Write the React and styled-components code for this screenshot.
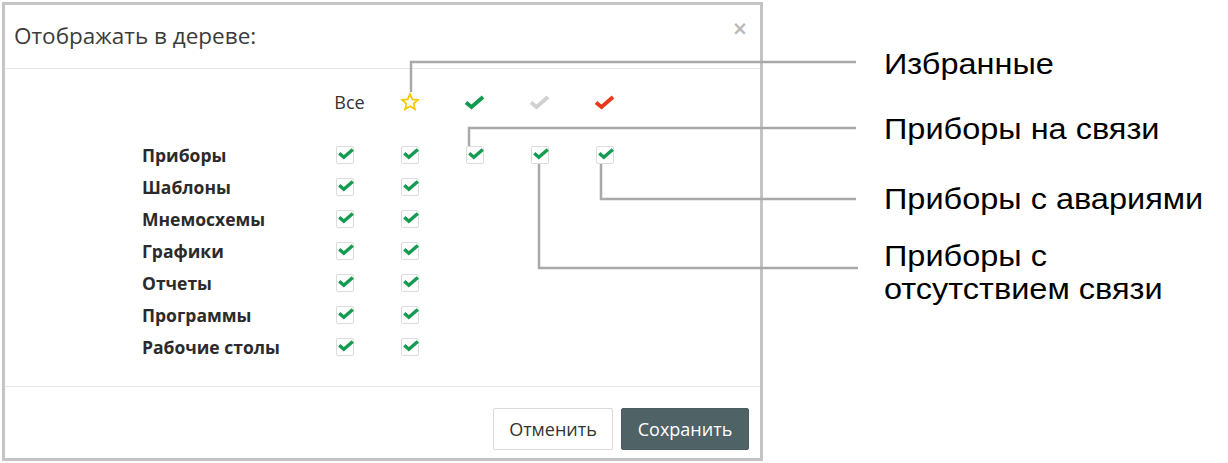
import React from "react";
import styled, { createGlobalStyle } from "styled-components";

const Global = createGlobalStyle`
  html, body { margin: 0; padding: 0; background: #fff; }
  body { font-family: "Open Sans", "Noto Sans", sans-serif; }
  * { box-sizing: border-box; }
`;

const Page = styled.div`
  position: relative;
  width: 1228px;
  height: 463px;
  display: flex;
  align-items: flex-start;
  overflow: hidden;
`;

const Dialog = styled.div`
  margin: 2px 0 0 2px;
  width: 761px;
  height: 459px;
  border: 3px solid #c4c4c4;
  background: #fff;
  display: flex;
  flex-direction: column;
  flex-shrink: 0;
`;

const Header = styled.div`
  height: 64px;
  border-bottom: 1px solid #e6e6e6;
  display: flex;
  align-items: flex-start;
  justify-content: space-between;
  padding: 0 12px 0 9px;
`;

const Title = styled.h4`
  margin: 17px 0 0;
  font-size: 22.5px;
  font-weight: 400;
  color: #3b3b3b;
  line-height: 28px;
`;

const Close = styled.span`
  margin-top: 13px;
  font-size: 19px;
  line-height: 20px;
  font-weight: 700;
  color: #b8b8b8;
  font-family: "DejaVu Sans", sans-serif;
`;

const Body = styled.div`
  flex: 1;
  padding: 13px 0 0 137px;
`;

const Grid = styled.div`
  display: grid;
  grid-template-columns: 170px repeat(5, 65px);
  grid-template-rows: 57px;
  grid-auto-rows: 32px;
  align-items: center;
`;

const HeadCell = styled.div`
  align-self: start;
  height: 40px;
  display: flex;
  align-items: center;
  justify-content: center;
  font-size: 18px;
  color: #333;
  padding-left: ${(p) => p.$shift || 0}px;
`;

const RowLabel = styled.div`
  font-size: 17.5px;
  font-weight: 700;
  color: #2b2b2b;
  white-space: nowrap;
`;

const Cell = styled.div`
  display: flex;
  justify-content: center;
  align-items: center;
`;

const Box = styled.span`
  position: relative;
  width: 18px;
  height: 18px;
  border: 1px solid #dcdcdc;
  border-radius: 2px;
  background: #fff;
  display: inline-block;
`;

const BoxCheck = styled.svg`
  position: absolute;
  left: 1px;
  top: 1px;
`;

const Footer = styled.div`
  border-top: 1px solid #e6e6e6;
  padding: 21px 11px 8px;
  display: flex;
  justify-content: flex-end;
  gap: 8px;
`;

const Button = styled.button`
  height: 42px;
  width: ${(p) => (p.$primary ? 128 : 120)}px;
  border-radius: 2px;
  border: 1px solid ${(p) => (p.$primary ? "#4a5c60" : "#d9d9d9")};
  background: ${(p) => (p.$primary ? "#4f6266" : "#fff")};
  color: ${(p) => (p.$primary ? "#fff" : "#333")};
  font-family: "Open Sans", sans-serif;
  font-size: 18px;
  padding: 0;
`;

const Legend = styled.div`
  margin-left: 121px;
  display: flex;
  flex-direction: column;
  font-family: "Liberation Sans", Arial, sans-serif;
  color: #000;
`;

const LegendItem = styled.div`
  margin-top: ${(p) => p.$gap}px;
  font-size: 29px;
  line-height: 33px;
  white-space: nowrap;
  transform: scaleX(1.12);
  transform-origin: left center;
`;

const Callouts = styled.svg`
  position: absolute;
  left: 0;
  top: 0;
  pointer-events: none;
`;

const Check = ({ color }) => (
  <svg width="21" height="15" viewBox="0 0 21 15">
    <path d="M2 7.5 L7.5 12 L19 2" fill="none" stroke={color} strokeWidth="3.8" />
  </svg>
);

const Star = () => (
  <svg width="20" height="20" viewBox="0 0 24 24">
    <path
      d="M12 2.5 L14.8 8.9 L21.6 9.4 L16.4 13.9 L18 20.6 L12 17 L6 20.6 L7.6 13.9 L2.4 9.4 L9.2 8.9 Z"
      fill="none"
      stroke="#f6c700"
      strokeWidth="2"
    />
  </svg>
);

const CheckBox = () => (
  <Box>
    <BoxCheck width="16" height="12" viewBox="0 0 16 12">
      <path d="M1.3 5.2 L5.8 9.2 L14.8 1.5" fill="none" stroke="#139c52" strokeWidth="3.4" />
    </BoxCheck>
  </Box>
);

const rows = [
  { label: "Приборы", count: 5 },
  { label: "Шаблоны", count: 2 },
  { label: "Мнемосхемы", count: 2 },
  { label: "Графики", count: 2 },
  { label: "Отчеты", count: 2 },
  { label: "Программы", count: 2 },
  { label: "Рабочие столы", count: 2 },
];

const legend = [
  { text: "Избранные", gap: 48 },
  { text: "Приборы на связи", gap: 32 },
  { text: "Приборы с авариями", gap: 37 },
  { text: ["Приборы с", "отсутствием связи"], gap: 24 },
];

const lines = [
  "411,92 411,62 856,62",
  "469,146 469,128 856,128",
  "601,164 601,199 856,199",
  "539,164 539,268 858,268",
];

export default function App() {
  return (
    <Page>
      <Global />
      <Dialog>
        <Header>
          <Title>Отображать в дереве:</Title>
          <Close>×</Close>
        </Header>
        <Body>
          <Grid>
            <HeadCell />
            <HeadCell $shift={10}>Все</HeadCell>
            <HeadCell><Star /></HeadCell>
            <HeadCell><Check color="#119a4e" /></HeadCell>
            <HeadCell><Check color="#d0d0d0" /></HeadCell>
            <HeadCell><Check color="#e8391d" /></HeadCell>
            {rows.map((r) => (
              <React.Fragment key={r.label}>
                <RowLabel>{r.label}</RowLabel>
                {Array.from({ length: 5 }).map((_, i) => (
                  <Cell key={i}>{i < r.count ? <CheckBox /> : null}</Cell>
                ))}
              </React.Fragment>
            ))}
          </Grid>
        </Body>
        <Footer>
          <Button>Отменить</Button>
          <Button $primary>Сохранить</Button>
        </Footer>
      </Dialog>
      <Legend>
        {legend.map((l, i) => (
          <LegendItem key={i} $gap={l.gap}>
            {Array.isArray(l.text) ? l.text.map((t) => <div key={t}>{t}</div>) : l.text}
          </LegendItem>
        ))}
      </Legend>
      <Callouts width="1228" height="463" viewBox="0 0 1228 463">
        {lines.map((p) => (
          <polyline key={p} points={p} fill="none" stroke="#a9a9a9" strokeWidth="2.5" />
        ))}
      </Callouts>
    </Page>
  );
}
